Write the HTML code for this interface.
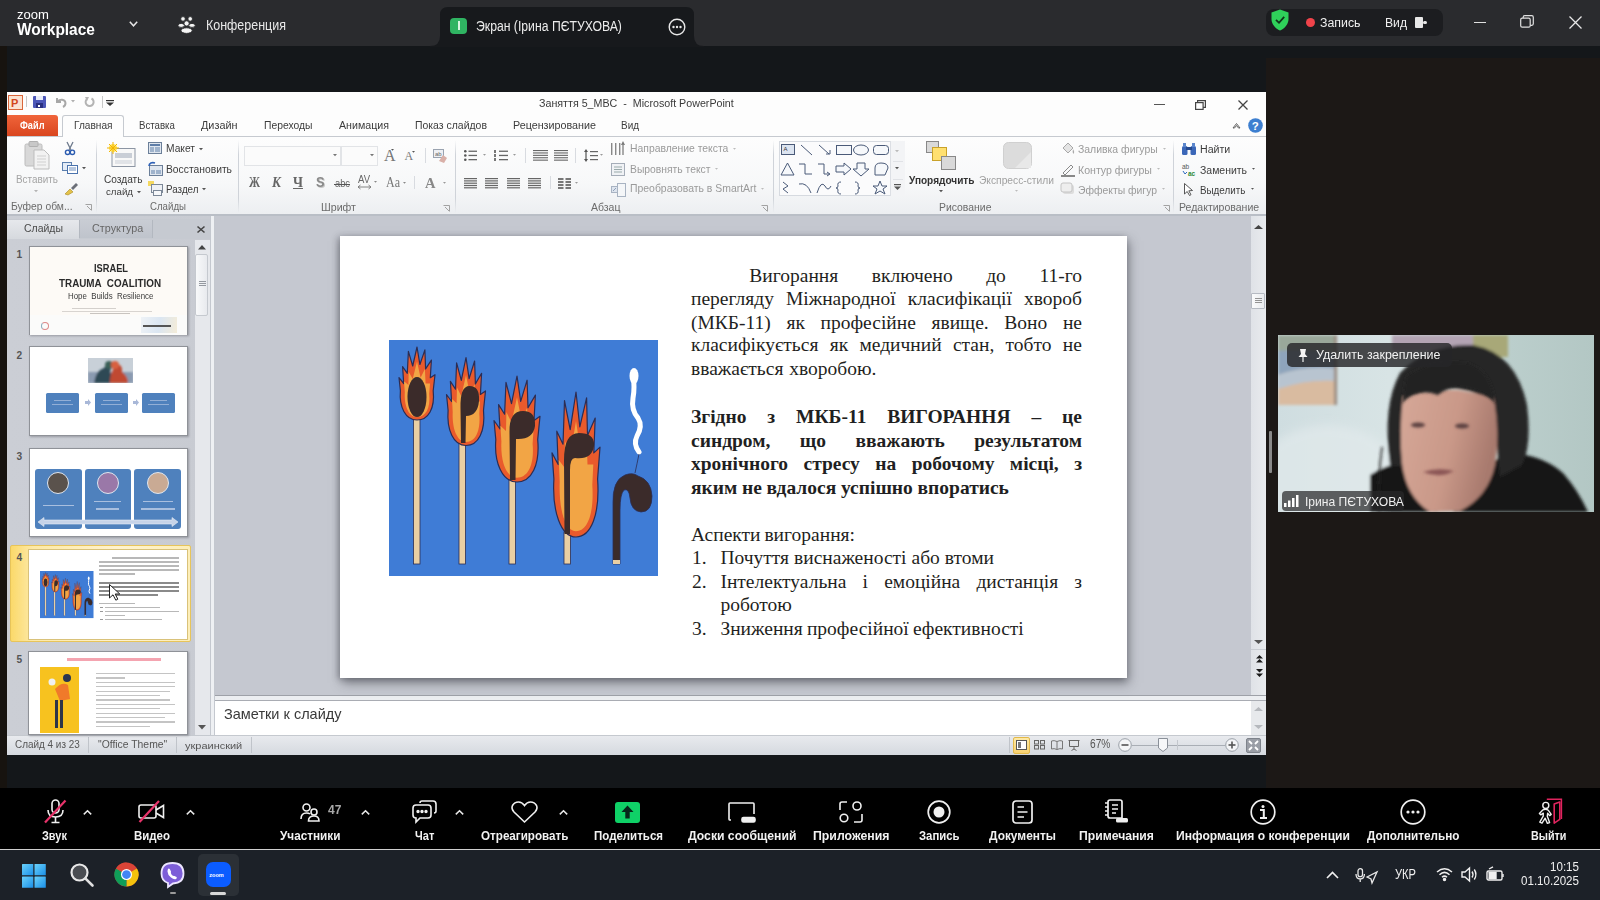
<!DOCTYPE html><html><head><meta charset="utf-8"><style>
*{margin:0;padding:0;box-sizing:border-box}
html,body{width:1600px;height:900px;overflow:hidden;background:#14171a;font-family:"Liberation Sans",sans-serif}
.a{position:absolute}
.t{position:absolute;white-space:nowrap;line-height:1;transform-origin:0 0}
svg{position:absolute;overflow:visible}
</style></head><body><div class="a" style="left:0px;top:0px;width:1600px;height:46px;background:#2a2b2e"></div>
<div class="a" style="left:0px;top:46px;width:1600px;height:742px;background:#14171a"></div>
<div class="a" style="left:0px;top:46px;width:7px;height:742px;background:#17130f"></div>
<div class="a" style="left:1266px;top:58px;width:334px;height:730px;background:#1c1816"></div>
<div class="a" style="left:0px;top:788px;width:1600px;height:61px;background:#000"></div>
<div class="a" style="left:0px;top:849px;width:1600px;height:1px;background:#cfcfcf"></div>
<div class="a" style="left:0px;top:850px;width:1600px;height:50px;background:#1c2128"></div>
<div class="t" style="left:17.00px;top:7.80px;font-size:13.23px;color:#fff;transform:scaleX(0.9895);">zoom</div>
<div class="t" style="left:17.00px;top:21.42px;font-size:16.28px;color:#fff;font-weight:700;transform:scaleX(0.9507);">Workplace</div>
<svg style="left:129px;top:21px" width="9" height="6"><path d="M0.8 0.8 L4.5 4.8 L8.2 0.8" stroke="#e6e6e6" stroke-width="1.5" fill="none"/></svg>
<svg style="left:178px;top:16px" width="18" height="18" viewBox="0 0 18 18"><g fill="#f4f4f4" stroke="#2a2b2e" stroke-width="0.9"><circle cx="5" cy="2.9" r="2.3"/><circle cx="12.2" cy="2.9" r="2.3"/><ellipse cx="3.2" cy="9.4" rx="3.2" ry="2"/><ellipse cx="14" cy="9.4" rx="3.2" ry="2"/><circle cx="8.6" cy="7.4" r="2.6"/><ellipse cx="8.6" cy="14.6" rx="5.6" ry="2.8"/></g></svg>
<div class="t" style="left:206.00px;top:18.79px;font-size:13.95px;color:#e8e8e8;transform:scaleX(0.8951);">Конференция</div>
<svg style="left:430px;top:7px" width="274" height="40" viewBox="0 0 274 40"><path d="M0 39 Q10 39 10 29 L10 8 Q10 0 18 0 L256 0 Q264 0 264 8 L264 29 Q264 39 274 39 L274 40 L0 40Z" fill="#17191c"/></svg>
<div class="a" style="left:450px;top:17.5px;width:17px;height:16.5px;background:#2fb462;border-radius:4px"></div>
<div class="a" style="left:458px;top:21px;width:1.6px;height:9px;background:#d8f5e0"></div>
<div class="t" style="left:476.00px;top:18.54px;font-size:14.24px;color:#ececec;transform:scaleX(0.8584);">Экран (Ірина ПЄТУХОВА)</div>
<svg style="left:668px;top:18px" width="18" height="18" viewBox="0 0 18 18"><circle cx="9" cy="9" r="7.8" stroke="#e8e8e8" stroke-width="1.4" fill="none"/><circle cx="5.5" cy="9" r="1.2" fill="#e8e8e8"/><circle cx="9" cy="9" r="1.2" fill="#e8e8e8"/><circle cx="12.5" cy="9" r="1.2" fill="#e8e8e8"/></svg>
<div class="a" style="left:1265.5px;top:9px;width:177px;height:26.5px;background:#1c1d20;border-radius:8px"></div>
<svg style="left:1271px;top:9px" width="18" height="22" viewBox="0 0 18 22"><path d="M9 0.5 L17.5 3.5 L17.5 10 C17.5 15.5 13.5 19.5 9 21.5 C4.5 19.5 0.5 15.5 0.5 10 L0.5 3.5Z" fill="#2fd15a"/><path d="M5 10.8 L8 13.8 L13.2 7.8" stroke="#10361a" stroke-width="1.8" fill="none"/></svg>
<div class="a" style="left:1306px;top:18px;width:9px;height:9px;background:#f0434a;border-radius:50%"></div>
<div class="t" style="left:1319.50px;top:15.63px;font-size:13.66px;color:#f0f0f0;transform:scaleX(0.9037);">Запись</div>
<div class="t" style="left:1385.00px;top:15.63px;font-size:13.66px;color:#f0f0f0;transform:scaleX(0.8896);">Вид</div>
<div class="a" style="left:1414.5px;top:17px;width:8px;height:10.5px;background:#e8e8e8;border-radius:1px"></div>
<div class="a" style="left:1423px;top:20.5px;width:3.5px;height:3.5px;background:#e8e8e8;border-radius:50%"></div>
<div class="a" style="left:1474px;top:21.5px;width:11.5px;height:1.2px;background:#e0e0e0"></div>
<svg style="left:1520px;top:15px" width="14" height="13" viewBox="0 0 14 13"><rect x="0.7" y="3.2" width="9.5" height="9" rx="1.5" stroke="#e0e0e0" stroke-width="1.2" fill="none"/><path d="M3.2 3.2 V2.2 Q3.2 0.7 4.7 0.7 H11.8 Q13.3 0.7 13.3 2.2 V8.8 Q13.3 10.3 11.8 10.3 H10.2" stroke="#e0e0e0" stroke-width="1.2" fill="none"/></svg>
<svg style="left:1568.5px;top:15.5px" width="13" height="13" viewBox="0 0 13 13"><path d="M0.5 0.5 L12.5 12.5 M12.5 0.5 L0.5 12.5" stroke="#e8e8e8" stroke-width="1.3"/></svg>
<div class="a" style="left:7px;top:92px;width:1259px;height:663px;background:#fdfdfd"></div>
<svg style="left:8px;top:94.5px" width="15" height="15" viewBox="0 0 15 15"><rect x="0.5" y="0.5" width="14" height="14" fill="#fbe3d2" stroke="#d9663a"/><text x="3" y="12" font-family="Liberation Sans" font-weight="700" font-size="11" fill="#d2461c">P</text></svg>
<div class="a" style="left:26px;top:96px;width:1px;height:11px;background:#c8c8c8"></div>
<svg style="left:33px;top:96px" width="13" height="12" viewBox="0 0 13 12"><rect x="0" y="0" width="13" height="12" rx="1" fill="#4c57b8"/><rect x="3" y="0" width="7" height="4" fill="#e8ecf8"/><rect x="3" y="7" width="7" height="5" fill="#2a3080"/><rect x="5" y="9" width="2" height="2" fill="#fff"/></svg>
<svg style="left:55px;top:97px" width="12" height="10" viewBox="0 0 12 10"><path d="M2 1 V5 H6" stroke="#a8a8a8" stroke-width="2" fill="none"/><path d="M2.5 4.5 C5 2 10 2 10.5 6 C10.5 8 9 9.5 8 10" stroke="#a8a8a8" stroke-width="2" fill="none"/></svg>
<svg style="left:71px;top:100px" width="4" height="3"><path d="M0 0 H4 L2 2.5Z" fill="#b0b0b0"/></svg>
<svg style="left:84px;top:97px" width="11" height="10" viewBox="0 0 11 10"><path d="M7.5 1.5 A4 4 0 1 1 3 2" stroke="#b4b4b4" stroke-width="2" fill="none"/><path d="M1 0 L5 0 L3 4Z" fill="#b4b4b4"/></svg>
<div class="a" style="left:102px;top:96px;width:1px;height:12px;background:#c8c8c8"></div>
<svg style="left:106px;top:100px" width="8" height="6"><rect x="0" y="0" width="8" height="1.2" fill="#333"/><path d="M0 2.5 H8 L4 6Z" fill="#333"/></svg>
<div class="t" style="left:538.50px;top:97.68px;font-size:11.48px;color:#3a3a3a;transform:scaleX(0.9323);white-space:pre">Заняття 5_MBC  -  Microsoft PowerPoint</div>
<div class="a" style="left:1154px;top:104px;width:10.5px;height:1.3px;background:#555"></div>
<svg style="left:1195px;top:100px" width="11" height="10" viewBox="0 0 11 10"><rect x="0.6" y="2.6" width="7.5" height="6.8" stroke="#444" stroke-width="1.2" fill="none"/><path d="M2.6 2.6 V0.6 H10.4 V7.4 H8.1" stroke="#444" stroke-width="1.2" fill="none"/></svg>
<svg style="left:1238px;top:100px" width="10" height="10" viewBox="0 0 10 10"><path d="M0.5 0.5 L9.5 9.5 M9.5 0.5 L0.5 9.5" stroke="#444" stroke-width="1.3"/></svg>
<div class="a" style="left:7px;top:136px;width:1259px;height:1px;background:#c6cad0"></div>
<div class="a" style="left:7px;top:115px;width:51px;height:21px;background:linear-gradient(#f0643a,#d9461f);border-radius:0 3px 0 0"></div>
<div class="t" style="left:20.00px;top:120.27px;font-size:10.90px;color:#fff;font-weight:700;transform:scaleX(0.8449);">Файл</div>
<div class="a" style="left:62px;top:115px;width:62px;height:22px;background:#fdfdfd;border:1px solid #c6cad0;border-bottom:none;border-radius:3px 3px 0 0"></div>
<div class="t" style="left:74.00px;top:120.27px;font-size:10.90px;color:#3c3c3c;transform:scaleX(0.9282);">Главная</div>
<div class="t" style="left:139.00px;top:120.27px;font-size:10.90px;color:#3c3c3c;transform:scaleX(0.8877);">Вставка</div>
<div class="t" style="left:201.00px;top:120.27px;font-size:10.90px;color:#3c3c3c;transform:scaleX(0.9965);">Дизайн</div>
<div class="t" style="left:264.00px;top:120.27px;font-size:10.90px;color:#3c3c3c;transform:scaleX(0.9486);">Переходы</div>
<div class="t" style="left:339.00px;top:120.27px;font-size:10.90px;color:#3c3c3c;transform:scaleX(0.9769);">Анимация</div>
<div class="t" style="left:415.00px;top:120.27px;font-size:10.90px;color:#3c3c3c;transform:scaleX(0.9593);">Показ слайдов</div>
<div class="t" style="left:512.50px;top:120.27px;font-size:10.90px;color:#3c3c3c;transform:scaleX(0.9863);">Рецензирование</div>
<div class="t" style="left:621.00px;top:120.27px;font-size:10.90px;color:#3c3c3c;transform:scaleX(0.9123);">Вид</div>
<svg style="left:1231.5px;top:122px" width="9" height="7" viewBox="0 0 9 7"><path d="M1 6 L4.5 1.5 L8 6 L6.5 6 L4.5 3.5 L2.5 6Z" stroke="#555" stroke-width="0.9" fill="none"/></svg>
<svg style="left:1248px;top:117.8px" width="15" height="15" viewBox="0 0 15 15"><circle cx="7.5" cy="7.5" r="7.3" fill="#3d7fd0"/><text x="3.8" y="12" font-family="Liberation Sans" font-weight="700" font-size="11.5" fill="#fff">?</text></svg>
<div class="a" style="left:7px;top:137px;width:1259px;height:78px;background:linear-gradient(#fdfdfd 0%,#f7f8f9 60%,#eceef1 100%)"></div>
<div class="a" style="left:7px;top:214px;width:1259px;height:1.5px;background:#b9bec6"></div>
<div class="a" style="left:96px;top:140px;width:1px;height:73px;background:linear-gradient(rgba(200,205,212,0),#cfd3d9 20%,#cfd3d9 80%,rgba(200,205,212,0))"></div>
<div class="a" style="left:238px;top:140px;width:1px;height:73px;background:linear-gradient(rgba(200,205,212,0),#cfd3d9 20%,#cfd3d9 80%,rgba(200,205,212,0))"></div>
<div class="a" style="left:454.5px;top:140px;width:1px;height:73px;background:linear-gradient(rgba(200,205,212,0),#cfd3d9 20%,#cfd3d9 80%,rgba(200,205,212,0))"></div>
<div class="a" style="left:772.5px;top:140px;width:1px;height:73px;background:linear-gradient(rgba(200,205,212,0),#cfd3d9 20%,#cfd3d9 80%,rgba(200,205,212,0))"></div>
<div class="a" style="left:1173px;top:140px;width:1px;height:73px;background:linear-gradient(rgba(200,205,212,0),#cfd3d9 20%,#cfd3d9 80%,rgba(200,205,212,0))"></div>
<svg style="left:24px;top:141px" width="26" height="29" viewBox="0 0 26 29"><rect x="1" y="3" width="17" height="22" rx="1.5" fill="#d8d8d8" stroke="#bcbcbc"/><rect x="5" y="0.5" width="9" height="5" rx="1" fill="#c8c8c8" stroke="#b0b0b0"/><path d="M10 9 H20 L25 14 V28 H10Z" fill="#f2f2f2" stroke="#bdbdbd"/><path d="M13 15 H22 M13 18 H22 M13 21 H22 M13 24 H22" stroke="#d0d0d0"/></svg>
<div class="t" style="left:15.50px;top:174.25px;font-size:11.05px;color:#a4a4a4;transform:scaleX(0.8967);">Вставить</div>
<svg style="left:33.5px;top:190px" width="4" height="4"><path d="M0 0 H4 L2.0 2.3Z" fill="#b4b4b4"/></svg>
<svg style="left:65px;top:142px" width="10" height="13" viewBox="0 0 10 13"><path d="M2 0 L6 8 M8 0 L4 8" stroke="#6d7a8c" stroke-width="1.3"/><circle cx="2.6" cy="10.3" r="2.2" fill="none" stroke="#2a5bb0" stroke-width="1.4"/><circle cx="7.4" cy="10.3" r="2.2" fill="none" stroke="#2a5bb0" stroke-width="1.4"/></svg>
<svg style="left:62px;top:162px" width="16" height="12" viewBox="0 0 16 12"><rect x="0.5" y="0.5" width="9" height="8" fill="#e4ecf6" stroke="#5b7fae"/><rect x="5.5" y="3.5" width="10" height="8" fill="#fff" stroke="#4a73ad"/><path d="M7 6 H14 M7 8 H14" stroke="#4a73ad" stroke-width="0.8"/></svg>
<svg style="left:82px;top:167px" width="4" height="4"><path d="M0 0 H4 L2.0 2.3Z" fill="#555"/></svg>
<svg style="left:64px;top:181px" width="14" height="14" viewBox="0 0 14 14"><path d="M1 13 L6 8 L9 11 L4 14Z" fill="#e4c24a" stroke="#a88a22" stroke-width="0.6"/><path d="M7 7 L12 2 L14 4 L9 9Z" fill="#6b6f78"/></svg>
<div class="t" style="left:11.00px;top:202.34px;font-size:10.47px;color:#6b6b6b;transform:scaleX(0.9852);">Буфер обм...</div>
<svg style="left:85px;top:204px" width="7" height="7"><path d="M0.5 0.5 H6.5 V6.5 M2 2 L6 6" stroke="#999" stroke-width="0.9" fill="none"/></svg>
<svg style="left:107px;top:142px" width="29" height="26" viewBox="0 0 29 26"><rect x="5" y="6.5" width="23" height="18" fill="#f8f8f8" stroke="#8c95a3"/><rect x="8" y="11" width="17" height="5" fill="#c9ced6"/><path d="M8 19 H25 M8 21 H25" stroke="#c9ced6"/><circle cx="6" cy="6" r="4" fill="#ffe35a"/><path d="M6 0 V12 M0 6 H12 M2 2 L10 10 M10 2 L2 10" stroke="#f2b400" stroke-width="1"/></svg>
<div class="t" style="left:104.00px;top:174.20px;font-size:11.34px;color:#3c3c3c;transform:scaleX(0.8937);">Создать</div>
<div class="t" style="left:106.00px;top:186.98px;font-size:9.59px;color:#3c3c3c;transform:scaleX(1.0124);">слайд</div>
<svg style="left:136.5px;top:191px" width="4" height="4"><path d="M0 0 H4 L2.0 2.3Z" fill="#555"/></svg>
<svg style="left:147.5px;top:142px" width="14" height="12" viewBox="0 0 14 12"><rect x="0.5" y="0.5" width="13" height="11" fill="#dfe6ef" stroke="#6b7f99"/><rect x="2" y="2" width="10" height="2" fill="#5f7ea8"/><rect x="2" y="5" width="4" height="5" fill="#9fb3cc"/><rect x="7" y="5" width="5" height="5" fill="#9fb3cc"/></svg>
<div class="t" style="left:165.50px;top:143.27px;font-size:10.90px;color:#3c3c3c;transform:scaleX(0.9400);">Макет</div>
<svg style="left:199px;top:148px" width="4" height="4"><path d="M0 0 H4 L2.0 2.3Z" fill="#555"/></svg>
<svg style="left:147.5px;top:162px" width="15" height="14" viewBox="0 0 15 14"><rect x="1.5" y="3.5" width="13" height="10" fill="#dfe6ef" stroke="#6b7f99"/><rect x="3" y="8" width="4" height="4" fill="#9fb3cc"/><rect x="8" y="8" width="5" height="4" fill="#9fb3cc"/><path d="M1 4 C1 1 4 0 7 1" stroke="#2e62b8" stroke-width="1.6" fill="none"/></svg>
<div class="t" style="left:165.50px;top:163.16px;font-size:11.63px;color:#3c3c3c;transform:scaleX(0.8862);">Восстановить</div>
<svg style="left:147.5px;top:181px" width="15" height="15" viewBox="0 0 15 15"><rect x="0" y="0" width="6" height="5" fill="#f4d860"/><rect x="3.5" y="3.5" width="11" height="8" fill="#eef1f5" stroke="#7b8797"/><rect x="5.5" y="9.5" width="8" height="5" fill="#f5f7fa" stroke="#7b8797"/></svg>
<div class="t" style="left:165.50px;top:183.16px;font-size:11.63px;color:#3c3c3c;transform:scaleX(0.8457);">Раздел</div>
<svg style="left:202px;top:188px" width="4" height="4"><path d="M0 0 H4 L2.0 2.3Z" fill="#555"/></svg>
<div class="t" style="left:150.00px;top:202.34px;font-size:10.47px;color:#6b6b6b;transform:scaleX(0.9235);">Слайды</div>
<div class="a" style="left:244px;top:146px;width:97px;height:19.5px;background:#fbfbfb;border:1px solid #e2e4e7"></div>
<div class="a" style="left:341px;top:146px;width:37px;height:19.5px;background:#fbfbfb;border:1px solid #e2e4e7"></div>
<svg style="left:333px;top:154px" width="4" height="4"><path d="M0 0 H4 L2.0 2.3Z" fill="#777"/></svg>
<svg style="left:369.5px;top:154px" width="4" height="4"><path d="M0 0 H4 L2.0 2.3Z" fill="#777"/></svg>
<div class="t" style="left:384.00px;top:147.58px;font-size:16.03px;color:#777;font-family:'Liberation Serif',serif;">A</div>
<div class="t" style="left:404.50px;top:151.33px;font-size:11.91px;color:#777;font-family:'Liberation Serif',serif;">A</div>
<svg style="left:391px;top:149px" width="3" height="3"><path d="M0 0 H3 L1.5 1.8Z" fill="#555"/></svg>
<svg style="left:412px;top:151px" width="3" height="3"><path d="M0 0 H3 L1.5 1.8Z" fill="#555"/></svg>
<div class="a" style="left:424.5px;top:148px;width:1px;height:15px;background:#d8dbe0"></div>
<svg style="left:432.5px;top:149px" width="15" height="14" viewBox="0 0 15 14"><rect x="0.5" y="0.5" width="10" height="8" fill="#eef0f4" stroke="#9aa3b0"/><text x="2" y="7" font-family="Liberation Sans" font-size="6" fill="#666">ab</text><path d="M6 12 L10 6 L14 9 L11 14Z" fill="#d9b0a8"/></svg>
<div class="t" style="left:249.00px;top:175.35px;font-size:14.50px;color:#666;font-weight:700;font-family:'Liberation Serif',serif;transform:scaleX(0.7661);">Ж</div>
<div class="t" style="left:271.50px;top:175.35px;font-size:14.50px;color:#666;font-weight:700;font-family:'Liberation Serif',serif;transform:scaleX(0.9034);font-style:italic;">К</div>
<div class="t" style="left:292.50px;top:175.35px;font-size:14.50px;color:#666;font-weight:700;font-family:'Liberation Serif',serif;transform:scaleX(0.9381);text-decoration:underline;">Ч</div>
<div class="t" style="left:316.00px;top:175.81px;font-size:13.81px;color:#8a8a8a;font-weight:700;transform:scaleX(0.9257);text-shadow:1px 1px 0 #c8c8c8">S</div>
<div class="t" style="left:334.50px;top:178.89px;font-size:10.17px;color:#666;transform:scaleX(0.9157);">abc</div>
<div class="a" style="left:334px;top:184px;width:16px;height:1px;background:#555"></div>
<div class="t" style="left:358.00px;top:174.89px;font-size:10.17px;color:#666;transform:scaleX(0.9361);">AV</div>
<svg style="left:358px;top:184.5px" width="13" height="4"><path d="M0 2 H13 M0 2 L2.5 0 M0 2 L2.5 4 M13 2 L10.5 0 M13 2 L10.5 4" stroke="#777" stroke-width="0.9" fill="none"/></svg>
<svg style="left:373.5px;top:181px" width="3" height="3"><path d="M0 0 H3 L1.5 1.8Z" fill="#888"/></svg>
<div class="t" style="left:386.00px;top:175.35px;font-size:14.50px;color:#777;font-family:'Liberation Serif',serif;transform:scaleX(0.8286);">Aa</div>
<svg style="left:403px;top:181.5px" width="3" height="3"><path d="M0 0 H3 L1.5 1.8Z" fill="#888"/></svg>
<div class="a" style="left:414px;top:176px;width:1px;height:13px;background:#d8dbe0"></div>
<div class="t" style="left:425.00px;top:175.22px;font-size:15.27px;color:#888;font-weight:700;font-family:'Liberation Serif',serif;transform:scaleX(0.9552);">A</div>
<svg style="left:443px;top:181.5px" width="3" height="3"><path d="M0 0 H3 L1.5 1.8Z" fill="#999"/></svg>
<div class="t" style="left:320.50px;top:202.79px;font-size:10.17px;color:#6b6b6b;transform:scaleX(1.0456);">Шрифт</div>
<svg style="left:442.5px;top:205px" width="7" height="7"><path d="M0.5 0.5 H6.5 V6.5 M2 2 L6 6" stroke="#999" stroke-width="0.9" fill="none"/></svg>
<svg style="left:464px;top:150px" width="13" height="11"><circle cx="1.3" cy="1.3" r="1.3" fill="#555"/><circle cx="1.3" cy="5.5" r="1.3" fill="#555"/><circle cx="1.3" cy="9.7" r="1.3" fill="#555"/><rect x="4.5" y="0.6" width="8.5" height="1.3" fill="#666"/><rect x="4.5" y="4.8" width="8.5" height="1.3" fill="#666"/><rect x="4.5" y="9" width="8.5" height="1.3" fill="#666"/></svg>
<svg style="left:483px;top:154px" width="3" height="3"><path d="M0 0 H3 L1.5 1.8Z" fill="#999"/></svg>
<svg style="left:494px;top:150px" width="14" height="11"><rect x="0" y="0" width="2" height="3" fill="#777"/><rect x="0" y="4" width="2" height="3" fill="#777"/><rect x="0" y="8" width="2" height="3" fill="#777"/><rect x="5" y="0.6" width="9" height="1.3" fill="#666"/><rect x="5" y="4.8" width="9" height="1.3" fill="#666"/><rect x="5" y="9" width="9" height="1.3" fill="#666"/></svg>
<svg style="left:513px;top:154px" width="3" height="3"><path d="M0 0 H3 L1.5 1.8Z" fill="#999"/></svg>
<div class="a" style="left:525px;top:148px;width:1px;height:15px;background:#d8dbe0"></div>
<svg style="left:533px;top:150px" width="15" height="14.0"><rect x="0" y="0.0" width="15" height="1.1" fill="#666"/><rect x="0" y="2.4" width="15" height="1.1" fill="#666"/><rect x="0" y="4.8" width="15" height="1.1" fill="#666"/><rect x="0" y="7.199999999999999" width="15" height="1.1" fill="#666"/><rect x="0" y="9.6" width="15" height="1.1" fill="#666"/></svg>
<svg style="left:554px;top:150px" width="14" height="14.0"><rect x="0" y="0.0" width="14" height="1.1" fill="#666"/><rect x="0" y="2.4" width="14" height="1.1" fill="#666"/><rect x="0" y="4.8" width="14" height="1.1" fill="#666"/><rect x="0" y="7.199999999999999" width="14" height="1.1" fill="#666"/><rect x="0" y="9.6" width="14" height="1.1" fill="#666"/></svg>
<div class="a" style="left:575px;top:148px;width:1px;height:15px;background:#d8dbe0"></div>
<svg style="left:584px;top:149px" width="14" height="13"><path d="M2 0 L4 3 H0Z M2 13 L4 10 H0Z" fill="#555"/><rect x="1.4" y="3" width="1.2" height="7" fill="#555"/><rect x="6" y="2" width="8" height="1.2" fill="#666"/><rect x="6" y="6" width="8" height="1.2" fill="#666"/><rect x="6" y="10" width="8" height="1.2" fill="#666"/></svg>
<svg style="left:600px;top:154px" width="3" height="3"><path d="M0 0 H3 L1.5 1.8Z" fill="#999"/></svg>
<svg style="left:464px;top:177.5px" width="13" height="13.5"><rect x="0" y="0.0" width="13" height="1.2" fill="#666"/><rect x="0" y="2.3" width="13" height="1.2" fill="#666"/><rect x="0" y="4.6" width="13" height="1.2" fill="#666"/><rect x="0" y="6.8999999999999995" width="13" height="1.2" fill="#666"/><rect x="0" y="9.2" width="13" height="1.2" fill="#666"/></svg>
<svg style="left:485px;top:177.5px" width="13" height="13.5"><rect x="0" y="0.0" width="13" height="1.2" fill="#666"/><rect x="0" y="2.3" width="13" height="1.2" fill="#666"/><rect x="0" y="4.6" width="13" height="1.2" fill="#666"/><rect x="0" y="6.8999999999999995" width="13" height="1.2" fill="#666"/><rect x="0" y="9.2" width="13" height="1.2" fill="#666"/></svg>
<svg style="left:507px;top:177.5px" width="13" height="13.5"><rect x="0" y="0.0" width="13" height="1.2" fill="#666"/><rect x="0" y="2.3" width="13" height="1.2" fill="#666"/><rect x="0" y="4.6" width="13" height="1.2" fill="#666"/><rect x="0" y="6.8999999999999995" width="13" height="1.2" fill="#666"/><rect x="0" y="9.2" width="13" height="1.2" fill="#666"/></svg>
<svg style="left:528px;top:177.5px" width="13" height="13.5"><rect x="0" y="0.0" width="13" height="1.2" fill="#666"/><rect x="0" y="2.3" width="13" height="1.2" fill="#666"/><rect x="0" y="4.6" width="13" height="1.2" fill="#666"/><rect x="0" y="6.8999999999999995" width="13" height="1.2" fill="#666"/><rect x="0" y="9.2" width="13" height="1.2" fill="#666"/></svg>
<div class="a" style="left:549.5px;top:176px;width:1px;height:13px;background:#d8dbe0"></div>
<svg style="left:557.5px;top:177.5px" width="13" height="11"><rect x="0" y="0" width="5.5" height="11" fill="#777"/><rect x="7.5" y="0" width="5.5" height="11" fill="#777"/><path d="M0 2.5 H13 M0 5.5 H13 M0 8.5 H13" stroke="#f4f4f4" stroke-width="1"/></svg>
<svg style="left:574.5px;top:181.5px" width="3" height="3"><path d="M0 0 H3 L1.5 1.8Z" fill="#999"/></svg>
<svg style="left:611px;top:141px" width="14" height="14"><rect x="0" y="2" width="1.4" height="12" fill="#888"/><rect x="4" y="2" width="1.4" height="12" fill="#888"/><rect x="8" y="2" width="1.4" height="12" fill="#888"/><path d="M12 0 L14 4 H10Z" fill="#777"/><rect x="11.3" y="3" width="1.4" height="11" fill="#888"/></svg>
<div class="t" style="left:629.50px;top:143.27px;font-size:10.90px;color:#9a9a9a;transform:scaleX(0.9526);">Направление текста</div>
<svg style="left:733px;top:148px" width="3" height="3"><path d="M0 0 H3 L1.5 1.8Z" fill="#bbb"/></svg>
<svg style="left:611px;top:162.5px" width="14" height="13"><rect x="0.5" y="0.5" width="13" height="12" fill="#f0f2f5" stroke="#a5adb8"/><path d="M3 4 H11 M3 6.5 H11 M3 9 H11" stroke="#9aa" stroke-width="1"/></svg>
<div class="t" style="left:629.50px;top:163.77px;font-size:10.90px;color:#9a9a9a;transform:scaleX(0.9480);">Выровнять текст</div>
<svg style="left:715px;top:168px" width="3" height="3"><path d="M0 0 H3 L1.5 1.8Z" fill="#bbb"/></svg>
<svg style="left:611px;top:182.5px" width="15" height="14"><rect x="0.5" y="3.5" width="8" height="6" fill="#dde4ee" stroke="#a8b3c2"/><rect x="6.5" y="0.5" width="8" height="13" fill="#f4f6f8" stroke="#a8b3c2"/><path d="M2 8 L5 5" stroke="#8fa0b8"/></svg>
<div class="t" style="left:629.50px;top:183.20px;font-size:11.34px;color:#9a9a9a;transform:scaleX(0.9199);">Преобразовать в SmartArt</div>
<svg style="left:761px;top:188px" width="3" height="3"><path d="M0 0 H3 L1.5 1.8Z" fill="#bbb"/></svg>
<div class="t" style="left:590.50px;top:202.79px;font-size:10.17px;color:#6b6b6b;transform:scaleX(1.0337);">Абзац</div>
<svg style="left:760.5px;top:205px" width="7" height="7"><path d="M0.5 0.5 H6.5 V6.5 M2 2 L6 6" stroke="#999" stroke-width="0.9" fill="none"/></svg>
<div class="a" style="left:778.5px;top:141px;width:126px;height:55px;background:#fbfbfc;border:1px solid #d6dae0"></div>
<div class="a" style="left:890px;top:141px;width:14.5px;height:55px;background:#f3f4f6;border-left:1px solid #dcdfe4"></div>
<svg style="left:895px;top:150px" width="4" height="4"><path d="M0 0 H4 L2.0 2.3Z" fill="#bbb"/></svg>
<div class="a" style="left:893px;top:160.5px;width:10px;height:1px;background:#e0e2e6"></div>
<svg style="left:895px;top:167px" width="4" height="4"><path d="M0 0 H4 L2.0 2.3Z" fill="#555"/></svg>
<div class="a" style="left:893px;top:178.5px;width:10px;height:1px;background:#e0e2e6"></div>
<svg style="left:894px;top:184px" width="7" height="7"><rect x="0" y="0" width="7" height="1.2" fill="#555"/><path d="M0 2.5 H7 L3.5 6Z" fill="#555"/></svg>
<svg style="left:779px;top:142px" width="112" height="54" viewBox="0 0 112 54" fill="none" stroke="#4a5a78" stroke-width="1"><rect x="2.5" y="2.5" width="13" height="10" fill="#dce4f0"/><text x="4.5" y="9" font-family="Liberation Sans" font-size="6" fill="#333" stroke="none">A</text><path d="M22 3 L33 13"/><path d="M40 3 L50 12 M47 12 H51 V8" /><rect x="57.5" y="3.5" width="15" height="9" fill="#f6f8fb"/><ellipse cx="82" cy="8" rx="7.5" ry="5" fill="#f6f8fb"/><rect x="94.5" y="3.5" width="15" height="9" rx="3" fill="#f6f8fb"/><path d="M2 33 L8.5 21 L15 33Z" fill="#f6f8fb"/><path d="M20 22 H26 V32 H33"/><path d="M39 22 H45 V32 H50 M48 30 L51 32 L48 34"/><path d="M57 24 H65 V21 L72 27 L65 33 V30 H57Z" fill="#f6f8fb"/><path d="M78 21 H86 V27 H90 L82 34 L74 27 H78Z" fill="#f6f8fb"/><path d="M96 33 V26 Q96 21 102 21 Q109 21 109 26 L106 33Z" fill="#f6f8fb"/><path d="M4 40 L9 44 L4 47 L9 51"/><path d="M20 42 Q28 40 32 51"/><path d="M38 51 Q42 38 46 44 Q49 50 52 44"/><path d="M62 40 Q58 40 59 44 Q59 46 57 46 Q59 46 59 48 Q58 52 62 52"/><path d="M76 40 Q80 40 79 44 Q79 46 81 46 Q79 46 79 48 Q80 52 76 52"/><path d="M101 39 L103 44 L108 44 L104 47 L106 52 L101 49 L96 52 L98 47 L94 44 L99 44Z" fill="#f6f8fb"/></svg>
<svg style="left:926px;top:140.5px" width="30" height="29"><rect x="0.5" y="0.5" width="12" height="11" fill="#d9d9d9" stroke="#888"/><rect x="6.5" y="6.5" width="14" height="13" fill="#ffe070" stroke="#c9a22a"/><rect x="15.5" y="15.5" width="14" height="13" fill="#d9d9d9" stroke="#888"/></svg>
<div class="t" style="left:909.00px;top:174.46px;font-size:11.63px;color:#333;font-weight:700;transform:scaleX(0.8666);">Упорядочить</div>
<svg style="left:939px;top:190px" width="4" height="4"><path d="M0 0 H4 L2.0 2.3Z" fill="#555"/></svg>
<svg style="left:1003px;top:142px" width="29" height="27"><rect x="0.5" y="0.5" width="28" height="26" rx="5" fill="#dcdcdc" stroke="#d0d0d0"/><path d="M12 26 L28 10 L28 26Z" fill="#e8e8e8"/></svg>
<div class="t" style="left:979.40px;top:174.46px;font-size:11.63px;color:#a0a0a0;transform:scaleX(0.8817);">Экспресс-стили</div>
<svg style="left:1015px;top:190px" width="3" height="3"><path d="M0 0 H3 L1.5 1.8Z" fill="#bbb"/></svg>
<svg style="left:1061px;top:142.8px" width="14" height="12"><path d="M2 5 L7 0 L12 5 L7 10Z" fill="#e4e4e4" stroke="#a8a8a8"/><path d="M12 6 Q14 9 12.5 11 Q11 9 12 6Z" fill="#aaa"/></svg>
<div class="t" style="left:1077.80px;top:143.16px;font-size:11.63px;color:#9a9a9a;transform:scaleX(0.8977);">Заливка фигуры</div>
<svg style="left:1163px;top:147.5px" width="3" height="3"><path d="M0 0 H3 L1.5 1.8Z" fill="#bbb"/></svg>
<svg style="left:1061px;top:162.5px" width="14" height="14"><path d="M2 10 L10 2 L12 4 L4 12Z" fill="none" stroke="#8a8a8a"/><rect x="0" y="12" width="14" height="2" fill="#888"/></svg>
<div class="t" style="left:1077.80px;top:163.76px;font-size:11.63px;color:#9a9a9a;transform:scaleX(0.9098);">Контур фигуры</div>
<svg style="left:1157px;top:168px" width="3" height="3"><path d="M0 0 H3 L1.5 1.8Z" fill="#bbb"/></svg>
<svg style="left:1061px;top:182.5px" width="14" height="12"><rect x="2" y="2" width="11" height="9" rx="2" fill="#ddd"/><rect x="0" y="0" width="11" height="9" rx="2" fill="#eee" stroke="#c4c4c4"/></svg>
<div class="t" style="left:1077.80px;top:183.76px;font-size:11.63px;color:#9a9a9a;transform:scaleX(0.8922);">Эффекты фигур</div>
<svg style="left:1162px;top:188px" width="3" height="3"><path d="M0 0 H3 L1.5 1.8Z" fill="#bbb"/></svg>
<div class="t" style="left:938.75px;top:202.79px;font-size:10.17px;color:#6b6b6b;transform:scaleX(1.0248);">Рисование</div>
<svg style="left:1163px;top:205px" width="7" height="7"><path d="M0.5 0.5 H6.5 V6.5 M2 2 L6 6" stroke="#999" stroke-width="0.9" fill="none"/></svg>
<svg style="left:1182px;top:142.8px" width="14" height="12"><rect x="0" y="3" width="5.5" height="9" rx="1.5" fill="#3b67b8"/><rect x="8.5" y="3" width="5.5" height="9" rx="1.5" fill="#3b67b8"/><rect x="4" y="4" width="6" height="3" fill="#24498e"/><rect x="1" y="0" width="3" height="4" fill="#5b86cc"/><rect x="10" y="0" width="3" height="4" fill="#5b86cc"/></svg>
<div class="t" style="left:1199.70px;top:143.16px;font-size:11.63px;color:#3c3c3c;transform:scaleX(0.9127);">Найти</div>
<svg style="left:1182px;top:163px" width="15" height="13"><text x="0" y="6" font-family="Liberation Sans" font-size="6.5" fill="#555">ab</text><text x="6" y="12.5" font-family="Liberation Sans" font-weight="700" font-size="6.5" fill="#2d8a3a">ac</text><path d="M1 8 L3 11 L5 9" stroke="#2f6ac0" fill="none"/></svg>
<div class="t" style="left:1199.70px;top:163.76px;font-size:11.63px;color:#3c3c3c;transform:scaleX(0.8992);">Заменить</div>
<svg style="left:1251.5px;top:168px" width="3" height="3"><path d="M0 0 H3 L1.5 1.8Z" fill="#555"/></svg>
<svg style="left:1184px;top:183.4px" width="10" height="13"><path d="M0.5 0.5 V11 L3.2 8.5 L5.5 12.5 L7 11.7 L4.8 7.8 L8.5 7.5Z" fill="#fff" stroke="#444" stroke-width="0.9"/></svg>
<div class="t" style="left:1199.70px;top:183.76px;font-size:11.63px;color:#3c3c3c;transform:scaleX(0.8442);">Выделить</div>
<svg style="left:1250.5px;top:188px" width="3" height="3"><path d="M0 0 H3 L1.5 1.8Z" fill="#555"/></svg>
<div class="t" style="left:1178.75px;top:202.79px;font-size:10.17px;color:#6b6b6b;transform:scaleX(1.0357);">Редактирование</div>
<div class="a" style="left:7px;top:215.5px;width:1259px;height:520px;background:#c5c8d0"></div>
<div class="a" style="left:7px;top:215.5px;width:202.5px;height:520px;background:linear-gradient(90deg,#cbced5,#c8cbd2)"></div>
<div class="a" style="left:209.5px;top:215.5px;width:5px;height:520px;background:#eef0f3;border-left:1px solid #c4c8cf;border-right:1px solid #c4c8cf"></div>
<div class="a" style="left:7px;top:218.5px;width:202.5px;height:20px;background:#c6cad1"></div>
<div class="a" style="left:7px;top:219.5px;width:72px;height:19px;background:linear-gradient(#e6e8ec,#d6d9de)"></div>
<div class="a" style="left:79px;top:219.5px;width:74px;height:18px;background:linear-gradient(#c9cdd4,#bfc4cc);border-left:1px solid #b3b8c0;border-right:1px solid #b3b8c0"></div>
<div class="t" style="left:24.00px;top:222.62px;font-size:10.61px;color:#4a4a4a;transform:scaleX(0.9867);">Слайды</div>
<div class="t" style="left:91.70px;top:222.62px;font-size:10.61px;color:#666;transform:scaleX(1.0179);">Структура</div>
<svg style="left:196.5px;top:225.7px" width="8" height="7"><path d="M0.5 0.5 L7.5 6.5 M7.5 0.5 L0.5 6.5" stroke="#444" stroke-width="1.6"/></svg>
<div class="a" style="left:194.5px;top:240px;width:15px;height:495px;background:#e6e8ec"></div>
<svg style="left:198px;top:244.5px" width="8" height="5"><path d="M0 4.5 L4 0 L8 4.5Z" fill="#444"/></svg>
<div class="a" style="left:195.3px;top:253.9px;width:12.7px;height:62px;background:linear-gradient(90deg,#f8f9fa,#e8eaee);border:1px solid #c5c9cf;border-radius:2px"></div>
<svg style="left:198.5px;top:281px" width="7" height="6"><path d="M0 0.5 H7 M0 2.5 H7 M0 4.5 H7" stroke="#8a8f96" stroke-width="0.9"/></svg>
<svg style="left:198px;top:724.5px" width="8" height="5"><path d="M0 0 L4 4.5 L8 0Z" fill="#555"/></svg>
<div class="a" style="left:1250.7px;top:215.5px;width:15.3px;height:480px;background:linear-gradient(90deg,#dfe2e7,#e9ebee)"></div>
<svg style="left:1254px;top:225px" width="9" height="4"><path d="M0 4 L4.5 0 L9 4Z" fill="#444"/></svg>
<div class="a" style="left:1251.3px;top:292.7px;width:13.4px;height:16px;background:linear-gradient(90deg,#fafbfc,#e9ebee);border:1px solid #b5bac2;border-radius:1px"></div>
<svg style="left:1254.5px;top:297.5px" width="7" height="6"><path d="M0 0.5 H7 M0 2.5 H7 M0 4.5 H7" stroke="#888" stroke-width="0.9"/></svg>
<svg style="left:1254px;top:639.5px" width="9" height="4"><path d="M0 0 L4.5 4 L9 0Z" fill="#555"/></svg>
<div class="a" style="left:1251px;top:649px;width:15px;height:1px;background:#c9cdd3"></div>
<svg style="left:1255.5px;top:655px" width="7" height="23"><path d="M0 3.5 L3.5 0 L7 3.5Z M0 7.5 L3.5 4 L7 7.5Z M0 14 L3.5 17.5 L7 14Z M0 18.5 L3.5 22 L7 18.5Z" fill="#1a1a1a"/></svg>
<div class="a" style="left:214.5px;top:695px;width:1051.5px;height:5.5px;background:#eceef1;border-top:1px solid #9ea1a8;border-bottom:1px solid #a9acb3"></div>
<div class="a" style="left:214.5px;top:700.5px;width:1036px;height:34px;background:#fff"></div>
<div class="a" style="left:1250.7px;top:700.5px;width:15.3px;height:34px;background:#e7e9ec"></div>
<svg style="left:1254px;top:707px" width="9" height="4"><path d="M0 4 L4.5 0 L9 4Z" fill="#b5b8bd"/></svg>
<svg style="left:1254px;top:725px" width="9" height="4"><path d="M0 0 L4.5 4 L9 0Z" fill="#b5b8bd"/></svg>
<div class="t" style="left:224.40px;top:707.03px;font-size:14.97px;color:#3a3a3a;transform:scaleX(0.9690);">Заметки к слайду</div>
<div class="a" style="left:7px;top:734.5px;width:1259px;height:20.5px;background:linear-gradient(#e8eaee,#d5d9df);border-top:1px solid #c5c9cf"></div>
<div class="t" style="left:14.70px;top:739.25px;font-size:11.05px;color:#555;transform:scaleX(0.8990);">Слайд 4 из 23</div>
<div class="a" style="left:88px;top:737px;width:1px;height:16px;background:#c0c4ca"></div>
<div class="t" style="left:97.80px;top:739.25px;font-size:11.05px;color:#555;transform:scaleX(0.9385);">"Office Theme"</div>
<div class="a" style="left:176px;top:737px;width:1px;height:16px;background:#c0c4ca"></div>
<div class="t" style="left:184.60px;top:741.66px;font-size:8.43px;color:#555;transform:scaleX(1.3033);">украинский</div>
<div class="a" style="left:251px;top:737px;width:1px;height:16px;background:#c0c4ca"></div>
<div class="a" style="left:1009.3px;top:737px;width:1px;height:16px;background:#c0c4ca"></div>
<div class="a" style="left:1013px;top:736.8px;width:17.3px;height:17.2px;background:linear-gradient(#fde9a8,#f8d270);border:1px solid #e3b94a;border-radius:2px"></div>
<svg style="left:1016px;top:740px" width="11" height="10"><rect x="0.5" y="0.5" width="10" height="9" fill="#fff" stroke="#555"/><rect x="2" y="2" width="3" height="6" fill="#777"/></svg>
<svg style="left:1034px;top:740px" width="11" height="10" fill="none" stroke="#666"><rect x="0.5" y="0.5" width="4" height="3.5"/><rect x="6.5" y="0.5" width="4" height="3.5"/><rect x="0.5" y="5.5" width="4" height="3.5"/><rect x="6.5" y="5.5" width="4" height="3.5"/></svg>
<svg style="left:1050.5px;top:740px" width="12" height="10" fill="none" stroke="#777"><path d="M0.5 1 Q3 0 6 1.5 Q9 0 11.5 1 V9 Q9 8 6 9.5 Q3 8 0.5 9Z"/><path d="M6 1.5 V9.5"/></svg>
<svg style="left:1068.4px;top:740px" width="12" height="11" fill="none" stroke="#666"><path d="M0.5 0.5 H11.5 M1.5 0.5 V6.5 H10.5 V0.5 M6 6.5 V9 M3.5 10.5 L6 9 L8.5 10.5"/></svg>
<div class="t" style="left:1090.00px;top:738.04px;font-size:12.35px;color:#555;transform:scaleX(0.8216);">67%</div>
<svg style="left:1118px;top:738px" width="14" height="14"><circle cx="7" cy="7" r="6.3" fill="#f4f5f7" stroke="#9aa0a8"/><rect x="3.5" y="6.2" width="7" height="1.6" fill="#555"/></svg>
<div class="a" style="left:1132px;top:744.5px;width:93px;height:1px;background:#a9aeb5"></div>
<div class="a" style="left:1177px;top:740px;width:1px;height:10px;background:#c3c7cd"></div>
<svg style="left:1158px;top:738px" width="10" height="14"><path d="M0.5 0.5 H9.5 V10 L5 13.5 L0.5 10Z" fill="#f6f7f9" stroke="#8a9099"/></svg>
<svg style="left:1224.5px;top:738px" width="14" height="14"><circle cx="7" cy="7" r="6.3" fill="#f4f5f7" stroke="#9aa0a8"/><rect x="3.5" y="6.2" width="7" height="1.6" fill="#555"/><rect x="6.2" y="3.5" width="1.6" height="7" fill="#555"/></svg>
<svg style="left:1246.4px;top:737.5px" width="15" height="15"><rect x="0.5" y="0.5" width="14" height="14" rx="1.5" fill="#9a9ea6" stroke="#7e838b"/><path d="M3 3 L6 6 M12 3 L9 6 M3 12 L6 9 M12 12 L9 9" stroke="#fff" stroke-width="1.8"/></svg>
<div class="a" style="left:340px;top:236px;width:787px;height:442px;background:#fff;box-shadow:2px 5px 10px rgba(50,52,60,0.5),-2px 1px 6px rgba(50,52,60,0.35)"></div>
<svg style="left:389px;top:340px" width="269" height="236" viewBox="0 0 269 236"><rect x="0" y="0" width="269" height="236" fill="#3f7cd6"/><rect x="24.5" y="75.0" width="6.5" height="149.0" fill="#e9cfa3" stroke="#2b2d55" stroke-width="0.8"/><rect x="70.0" y="101.0" width="6.5" height="123.0" fill="#e9cfa3" stroke="#2b2d55" stroke-width="0.8"/><rect x="120.0" y="138.0" width="6.5" height="86.0" fill="#e9cfa3" stroke="#2b2d55" stroke-width="0.8"/><rect x="175.0" y="192.0" width="6.5" height="32.0" fill="#e9cfa3" stroke="#2b2d55" stroke-width="0.8"/><path d="M28.0 80.0 C16.5 80.0 10.0 66.9 11.4 50.8 L10.0 37.7 L14.7 43.5 L13.6 26.7 L18.3 33.3 L19.4 11.4 L23.7 26.0 L28.0 7.0 L30.9 24.5 L35.9 9.9 L36.6 28.9 L42.4 20.1 L41.3 37.7 L46.0 34.7 L44.2 50.8 C46.0 68.3 39.5 80.0 28.0 80.0 Z" fill="#e95a2c" stroke="#2b2d55" stroke-width="1.2" stroke-linejoin="round"/><path d="M28.0 77.1 C19.4 77.1 15.0 65.4 15.8 52.3 L15.0 41.3 L19.4 45.0 L19.7 31.8 L23.7 39.1 L28.0 21.6 L31.6 37.7 L35.9 28.9 L36.6 43.5 L41.0 43.5 L40.2 53.7 C41.7 68.3 36.6 77.1 28.0 77.1 Z" fill="#f2a545"/><path d="M77.0 105.5 C64.5 105.5 57.5 89.7 59.1 70.3 L57.5 54.5 L62.6 61.5 L61.4 41.3 L66.5 49.2 L67.6 22.8 L72.3 40.4 L77.0 17.5 L80.1 38.6 L85.6 21.0 L86.4 43.9 L92.6 33.3 L91.4 54.5 L96.5 50.9 L94.5 70.3 C96.5 91.4 89.5 105.5 77.0 105.5 Z" fill="#e95a2c" stroke="#2b2d55" stroke-width="1.2" stroke-linejoin="round"/><path d="M77.0 102.0 C67.6 102.0 63.0 87.9 63.7 72.1 L63.0 58.9 L67.6 63.3 L68.0 47.4 L72.3 56.2 L77.0 35.1 L80.9 54.5 L85.6 43.9 L86.4 61.5 L91.0 61.5 L90.3 73.8 C91.8 91.4 86.4 102.0 77.0 102.0 Z" fill="#f2a545"/><path d="M128.0 142.0 C113.3 142.0 105.0 122.9 106.8 99.6 L105.0 80.5 L111.0 89.0 L109.6 64.6 L115.6 74.2 L117.0 42.4 L122.5 63.6 L128.0 36.0 L131.7 61.4 L138.1 40.2 L139.0 67.8 L146.4 55.1 L145.0 80.5 L151.0 76.3 L148.7 99.6 C151.0 125.0 142.7 142.0 128.0 142.0 Z" fill="#e95a2c" stroke="#2b2d55" stroke-width="1.2" stroke-linejoin="round"/><path d="M128.0 137.8 C117.0 137.8 111.4 120.8 112.4 101.7 L111.4 85.8 L117.0 91.1 L117.4 72.0 L122.5 82.6 L128.0 57.2 L132.6 80.5 L138.1 67.8 L139.0 89.0 L144.6 89.0 L143.6 103.8 C145.5 125.0 139.0 137.8 128.0 137.8 Z" fill="#f2a545"/><path d="M187.0 197.0 C171.6 197.0 163.0 170.9 164.9 139.0 L163.0 112.9 L169.2 124.5 L167.8 91.2 L174.0 104.2 L175.5 60.7 L181.2 89.7 L187.0 52.0 L190.8 86.8 L197.6 57.8 L198.5 95.5 L206.2 78.1 L204.8 112.9 L211.0 107.1 L208.6 139.0 C211.0 173.8 202.4 197.0 187.0 197.0 Z" fill="#e95a2c" stroke="#2b2d55" stroke-width="1.2" stroke-linejoin="round"/><path d="M187.0 191.2 C175.5 191.2 169.7 168.0 170.7 141.9 L169.7 120.1 L175.5 127.4 L176.0 101.3 L181.2 115.8 L187.0 81.0 L191.8 112.9 L197.6 95.5 L198.5 124.5 L204.3 124.5 L203.3 144.8 C205.2 173.8 198.5 191.2 187.0 191.2 Z" fill="#f2a545"/><ellipse cx="28" cy="57" rx="9.5" ry="20" fill="#3b2b2a"/><path d="M72 103 L71.5 68 Q71 46 80.5 46 Q91 46 90 61 Q88.5 76 77 76 L76.5 103Z" fill="#3b2b2a"/><path d="M121 140 L120.5 92 Q120 71 134 71 Q147 71 146 86 Q144 100 127 99 L126.5 140Z" fill="#3b2b2a"/><path d="M175.5 194 L175 120 Q175 93 190 93 Q206 93 205 106 Q203 120 186 118 Q181 118 181 130 L181 194Z" fill="#3b2b2a"/><path d="M224 224 L224 165 Q223 140 236 135 Q244 132 249 136 Q262 140 263 156 Q263 172 252 172 Q242 171 241 158 Q240 148 235 150 Q231 154 231 170 L231 224Z" fill="#3b2b2a" stroke="#2b2d55" stroke-width="0.8"/><rect x="224" y="220" width="7" height="4" fill="#e9cfa3"/><path d="M244 34 Q246 48 244 58 Q242 70 249 78 Q254 86 248 96 Q244 104 250 112" stroke="#fff" stroke-width="5" fill="none" stroke-linecap="round"/><ellipse cx="245" cy="36" rx="4.5" ry="8" fill="#fff"/><path d="M250 114 Q248 124 246 133" stroke="#2b2d55" stroke-width="0.8" fill="none"/></svg>
<div class="a" style="left:749.3px;top:266.17px;width:332.7px;display:flex;justify-content:space-between;font-family:'Liberation Serif',serif;font-size:19.5px;line-height:1;color:#1f1f22;white-space:nowrap;"><span>Вигорання</span><span>включено</span><span>до</span><span>11-го</span></div>
<div class="a" style="left:691.0px;top:288.67px;width:391.0px;display:flex;justify-content:space-between;font-family:'Liberation Serif',serif;font-size:19.5px;line-height:1;color:#1f1f22;white-space:nowrap;"><span>перегляду</span><span>Міжнародної</span><span>класифікації</span><span>хвороб</span></div>
<div class="a" style="left:691.0px;top:312.57px;width:391.0px;display:flex;justify-content:space-between;font-family:'Liberation Serif',serif;font-size:19.5px;line-height:1;color:#1f1f22;white-space:nowrap;"><span>(МКБ-11)</span><span>як</span><span>професійне</span><span>явище.</span><span>Воно</span><span>не</span></div>
<div class="a" style="left:691.0px;top:335.37px;width:391.0px;display:flex;justify-content:space-between;font-family:'Liberation Serif',serif;font-size:19.5px;line-height:1;color:#1f1f22;white-space:nowrap;"><span>класифікується</span><span>як</span><span>медичний</span><span>стан,</span><span>тобто</span><span>не</span></div>
<div class="a" style="left:691.0px;top:359.27px;font-family:'Liberation Serif',serif;font-size:19.5px;line-height:1;color:#1f1f22;white-space:pre;word-spacing:1.0px;">вважається хворобою.</div>
<div class="a" style="left:691.0px;top:406.97px;width:391.0px;display:flex;justify-content:space-between;font-family:'Liberation Serif',serif;font-size:19.5px;line-height:1;color:#1f1f22;white-space:nowrap;font-weight:700;"><span>Згідно</span><span>з</span><span>МКБ-11</span><span>ВИГОРАННЯ</span><span>–</span><span>це</span></div>
<div class="a" style="left:691.0px;top:430.87px;width:391.0px;display:flex;justify-content:space-between;font-family:'Liberation Serif',serif;font-size:19.5px;line-height:1;color:#1f1f22;white-space:nowrap;font-weight:700;"><span>синдром,</span><span>що</span><span>вважають</span><span>результатом</span></div>
<div class="a" style="left:691.0px;top:454.27px;width:391.0px;display:flex;justify-content:space-between;font-family:'Liberation Serif',serif;font-size:19.5px;line-height:1;color:#1f1f22;white-space:nowrap;font-weight:700;"><span>хронічного</span><span>стресу</span><span>на</span><span>робочому</span><span>місці,</span><span>з</span></div>
<div class="a" style="left:691.0px;top:477.57px;font-family:'Liberation Serif',serif;font-size:19.5px;line-height:1;color:#1f1f22;white-space:pre;word-spacing:-0.2px;font-weight:700;">яким не вдалося успішно впоратись</div>
<div class="a" style="left:691.0px;top:524.67px;font-family:'Liberation Serif',serif;font-size:19.5px;line-height:1;color:#1f1f22;white-space:pre;word-spacing:-1.0px;">Аспекти вигорання:</div>
<div class="a" style="left:692.0px;top:548.47px;font-family:'Liberation Serif',serif;font-size:19.5px;line-height:1;color:#1f1f22;white-space:pre;word-spacing:0.0px;">1.</div>
<div class="a" style="left:720.4px;top:548.47px;font-family:'Liberation Serif',serif;font-size:19.5px;line-height:1;color:#1f1f22;white-space:pre;word-spacing:0.1px;">Почуття виснаженості або втоми</div>
<div class="a" style="left:692.0px;top:571.57px;font-family:'Liberation Serif',serif;font-size:19.5px;line-height:1;color:#1f1f22;white-space:pre;word-spacing:0.0px;">2.</div>
<div class="a" style="left:720.4px;top:571.57px;width:361.6px;display:flex;justify-content:space-between;font-family:'Liberation Serif',serif;font-size:19.5px;line-height:1;color:#1f1f22;white-space:nowrap;"><span>Інтелектуальна</span><span>і</span><span>емоційна</span><span>дистанція</span><span>з</span></div>
<div class="a" style="left:720.4px;top:595.37px;font-family:'Liberation Serif',serif;font-size:19.5px;line-height:1;color:#1f1f22;white-space:pre;word-spacing:0.0px;">роботою</div>
<div class="a" style="left:692.0px;top:619.27px;font-family:'Liberation Serif',serif;font-size:19.5px;line-height:1;color:#1f1f22;white-space:pre;word-spacing:0.0px;">3.</div>
<div class="a" style="left:720.4px;top:619.27px;font-family:'Liberation Serif',serif;font-size:19.5px;line-height:1;color:#1f1f22;white-space:pre;word-spacing:-0.7px;">Зниження професійної ефективності</div>
<div class="a" style="left:28.9px;top:245.5px;width:159px;height:89.5px;background:#fdfaf6;border:1px solid #8f9298;box-shadow:1px 1px 2px rgba(60,60,70,0.35)"></div>
<div class="a" style="left:30px;top:315px;width:157px;height:20px;background:#fbfbfa"></div>
<div class="t" style="left:93.50px;top:263.84px;font-size:10.47px;color:#2a2a2a;font-weight:700;transform:scaleX(0.8865);">ISRAEL</div>
<div class="t" style="left:58.50px;top:277.75px;font-size:11.05px;color:#2a2a2a;font-weight:700;transform:scaleX(0.8921);white-space:pre">TRAUMA  COALITION</div>
<div class="t" style="left:67.80px;top:291.57px;font-size:9.01px;color:#3a3a3a;transform:scaleX(0.8753);white-space:pre">Hope  Builds  Resilience</div>
<div class="a" style="left:72px;top:308px;width:44px;height:1px;background:#d4d0cc"></div>
<div class="a" style="left:62px;top:311px;width:90px;height:1px;background:#d8d4d0"></div>
<div class="a" style="left:90px;top:313px;width:40px;height:1px;background:#c8c4c0"></div>
<div class="a" style="left:41px;top:322px;width:8px;height:8px;border:1.3px solid #d88;border-left-color:#8ab;border-radius:50%"></div>
<div class="a" style="left:141px;top:317px;width:36px;height:16px;background:linear-gradient(100deg,#eef2f6,#dbe6f2 50%,#f4ecd8)"></div>
<div class="a" style="left:143px;top:325px;width:28px;height:1.8px;background:#555"></div>
<div class="a" style="left:28.7px;top:346.2px;width:159px;height:90.3px;background:#fff;border:1px solid #8f9298;box-shadow:1px 1px 2px rgba(60,60,70,0.35)"></div>
<svg style="left:87.5px;top:357.9px;overflow:hidden" width="45.5" height="25" viewBox="0 0 45.5 25"><defs><filter id="tb"><feGaussianBlur stdDeviation="1"/></filter></defs><rect width="45.5" height="25" fill="#c8d0d8"/><g filter="url(#tb)"><rect x="0" y="14" width="45.5" height="11" fill="#8a9ab0"/><path d="M6 25 Q8 12 16 10 Q20 4 24 6 L22 14 Q26 20 24 25Z" fill="#2f4a55"/><path d="M22 25 Q22 16 25 12 Q24 5 30 6 Q35 8 34 14 Q40 18 40 25Z" fill="#c04830"/><circle cx="21" cy="7" r="4" fill="#3a6058"/><circle cx="27" cy="7" r="4" fill="#d86040"/></g></svg>
<div class="a" style="left:46.2px;top:392.9px;width:33px;height:20.3px;background:#4f81bd;border-radius:1.5px"></div>
<div class="a" style="left:54.2px;top:400px;width:17px;height:1px;background:#93afd6"></div>
<div class="a" style="left:52.2px;top:404px;width:21px;height:1px;background:#93afd6"></div>
<div class="a" style="left:94.5px;top:392.9px;width:33px;height:20.3px;background:#4f81bd;border-radius:1.5px"></div>
<div class="a" style="left:102.5px;top:400px;width:17px;height:1px;background:#93afd6"></div>
<div class="a" style="left:100.5px;top:404px;width:21px;height:1px;background:#93afd6"></div>
<div class="a" style="left:141.9px;top:392.9px;width:33px;height:20.3px;background:#4f81bd;border-radius:1.5px"></div>
<div class="a" style="left:149.9px;top:400px;width:17px;height:1px;background:#93afd6"></div>
<div class="a" style="left:147.9px;top:404px;width:21px;height:1px;background:#93afd6"></div>
<svg style="left:84.5px;top:399px" width="6" height="7"><path d="M0 2 H3 V0 L6 3.5 L3 7 V5 H0Z" fill="#a9b8d8"/></svg>
<svg style="left:132.5px;top:399px" width="6" height="7"><path d="M0 2 H3 V0 L6 3.5 L3 7 V5 H0Z" fill="#a9b8d8"/></svg>
<div class="a" style="left:28.7px;top:448.2px;width:159px;height:89.3px;background:#fff;border:1px solid #8f9298;box-shadow:1px 1px 2px rgba(60,60,70,0.35)"></div>
<div class="a" style="left:35px;top:469px;width:47px;height:60px;background:#4f81bd;border-radius:3px"></div>
<div class="a" style="left:85.2px;top:469px;width:45.499999999999986px;height:60px;background:#4f81bd;border-radius:3px"></div>
<div class="a" style="left:134.2px;top:469px;width:46.60000000000002px;height:60px;background:#4f81bd;border-radius:3px"></div>
<div class="a" style="left:47.3px;top:471.5px;width:22px;height:22px;background:#5a524c;border:1.5px solid #dfe6ef;border-radius:50%"></div>
<div class="a" style="left:96.8px;top:471.5px;width:22px;height:22px;background:#9a78a8;border:1.5px solid #dfe6ef;border-radius:50%"></div>
<div class="a" style="left:146.5px;top:471.5px;width:22px;height:22px;background:#c9aa94;border:1.5px solid #dfe6ef;border-radius:50%"></div>
<div class="a" style="left:43px;top:504.5px;width:31px;height:1.5px;background:#a9bfdf"></div>
<div class="a" style="left:94px;top:500.5px;width:27px;height:1.5px;background:#a9bfdf"></div>
<div class="a" style="left:96px;top:508px;width:23px;height:1.5px;background:#a9bfdf"></div>
<div class="a" style="left:143px;top:500.5px;width:30px;height:1.5px;background:#a9bfdf"></div>
<div class="a" style="left:141px;top:508px;width:34px;height:1.5px;background:#a9bfdf"></div>
<svg style="left:38px;top:517px" width="140" height="10"><path d="M0 5 L6 0.5 V3 H134 V0.5 L140 5 L134 9.5 V7 H6 V9.5Z" fill="#c6d3e8" stroke="#e6ecf5" stroke-width="0.6"/></svg>
<div class="a" style="left:9.8px;top:545.4px;width:181.4px;height:96.8px;background:linear-gradient(90deg,#fbd96a,#fde9a6 12%,#fff3cf 60%,#fdeeb8);border:1px solid #e7c45a;border-radius:2px"></div>
<div class="a" style="left:28.1px;top:549.3px;width:160.2px;height:90.5px;background:#fff;border:1px solid #d9c27a"></div>
<svg style="left:39.9px;top:570.6px" width="53.5" height="47.1" viewBox="0 0 269 236" preserveAspectRatio="none"><rect x="0" y="0" width="269" height="236" fill="#3f7cd6"/><rect x="24.5" y="75.0" width="6.5" height="149.0" fill="#e9cfa3" stroke="#2b2d55" stroke-width="0.8"/><rect x="70.0" y="101.0" width="6.5" height="123.0" fill="#e9cfa3" stroke="#2b2d55" stroke-width="0.8"/><rect x="120.0" y="138.0" width="6.5" height="86.0" fill="#e9cfa3" stroke="#2b2d55" stroke-width="0.8"/><rect x="175.0" y="192.0" width="6.5" height="32.0" fill="#e9cfa3" stroke="#2b2d55" stroke-width="0.8"/><path d="M28.0 80.0 C16.5 80.0 10.0 66.9 11.4 50.8 L10.0 37.7 L14.7 43.5 L13.6 26.7 L18.3 33.3 L19.4 11.4 L23.7 26.0 L28.0 7.0 L30.9 24.5 L35.9 9.9 L36.6 28.9 L42.4 20.1 L41.3 37.7 L46.0 34.7 L44.2 50.8 C46.0 68.3 39.5 80.0 28.0 80.0 Z" fill="#e95a2c" stroke="#2b2d55" stroke-width="1.2" stroke-linejoin="round"/><path d="M28.0 77.1 C19.4 77.1 15.0 65.4 15.8 52.3 L15.0 41.3 L19.4 45.0 L19.7 31.8 L23.7 39.1 L28.0 21.6 L31.6 37.7 L35.9 28.9 L36.6 43.5 L41.0 43.5 L40.2 53.7 C41.7 68.3 36.6 77.1 28.0 77.1 Z" fill="#f2a545"/><path d="M77.0 105.5 C64.5 105.5 57.5 89.7 59.1 70.3 L57.5 54.5 L62.6 61.5 L61.4 41.3 L66.5 49.2 L67.6 22.8 L72.3 40.4 L77.0 17.5 L80.1 38.6 L85.6 21.0 L86.4 43.9 L92.6 33.3 L91.4 54.5 L96.5 50.9 L94.5 70.3 C96.5 91.4 89.5 105.5 77.0 105.5 Z" fill="#e95a2c" stroke="#2b2d55" stroke-width="1.2" stroke-linejoin="round"/><path d="M77.0 102.0 C67.6 102.0 63.0 87.9 63.7 72.1 L63.0 58.9 L67.6 63.3 L68.0 47.4 L72.3 56.2 L77.0 35.1 L80.9 54.5 L85.6 43.9 L86.4 61.5 L91.0 61.5 L90.3 73.8 C91.8 91.4 86.4 102.0 77.0 102.0 Z" fill="#f2a545"/><path d="M128.0 142.0 C113.3 142.0 105.0 122.9 106.8 99.6 L105.0 80.5 L111.0 89.0 L109.6 64.6 L115.6 74.2 L117.0 42.4 L122.5 63.6 L128.0 36.0 L131.7 61.4 L138.1 40.2 L139.0 67.8 L146.4 55.1 L145.0 80.5 L151.0 76.3 L148.7 99.6 C151.0 125.0 142.7 142.0 128.0 142.0 Z" fill="#e95a2c" stroke="#2b2d55" stroke-width="1.2" stroke-linejoin="round"/><path d="M128.0 137.8 C117.0 137.8 111.4 120.8 112.4 101.7 L111.4 85.8 L117.0 91.1 L117.4 72.0 L122.5 82.6 L128.0 57.2 L132.6 80.5 L138.1 67.8 L139.0 89.0 L144.6 89.0 L143.6 103.8 C145.5 125.0 139.0 137.8 128.0 137.8 Z" fill="#f2a545"/><path d="M187.0 197.0 C171.6 197.0 163.0 170.9 164.9 139.0 L163.0 112.9 L169.2 124.5 L167.8 91.2 L174.0 104.2 L175.5 60.7 L181.2 89.7 L187.0 52.0 L190.8 86.8 L197.6 57.8 L198.5 95.5 L206.2 78.1 L204.8 112.9 L211.0 107.1 L208.6 139.0 C211.0 173.8 202.4 197.0 187.0 197.0 Z" fill="#e95a2c" stroke="#2b2d55" stroke-width="1.2" stroke-linejoin="round"/><path d="M187.0 191.2 C175.5 191.2 169.7 168.0 170.7 141.9 L169.7 120.1 L175.5 127.4 L176.0 101.3 L181.2 115.8 L187.0 81.0 L191.8 112.9 L197.6 95.5 L198.5 124.5 L204.3 124.5 L203.3 144.8 C205.2 173.8 198.5 191.2 187.0 191.2 Z" fill="#f2a545"/><ellipse cx="28" cy="57" rx="9.5" ry="20" fill="#3b2b2a"/><path d="M72 103 L71.5 68 Q71 46 80.5 46 Q91 46 90 61 Q88.5 76 77 76 L76.5 103Z" fill="#3b2b2a"/><path d="M121 140 L120.5 92 Q120 71 134 71 Q147 71 146 86 Q144 100 127 99 L126.5 140Z" fill="#3b2b2a"/><path d="M175.5 194 L175 120 Q175 93 190 93 Q206 93 205 106 Q203 120 186 118 Q181 118 181 130 L181 194Z" fill="#3b2b2a"/><path d="M224 224 L224 165 Q223 140 236 135 Q244 132 249 136 Q262 140 263 156 Q263 172 252 172 Q242 171 241 158 Q240 148 235 150 Q231 154 231 170 L231 224Z" fill="#3b2b2a" stroke="#2b2d55" stroke-width="0.8"/><rect x="224" y="220" width="7" height="4" fill="#e9cfa3"/><path d="M244 34 Q246 48 244 58 Q242 70 249 78 Q254 86 248 96 Q244 104 250 112" stroke="#fff" stroke-width="5" fill="none" stroke-linecap="round"/><ellipse cx="245" cy="36" rx="4.5" ry="8" fill="#fff"/><path d="M250 114 Q248 124 246 133" stroke="#2b2d55" stroke-width="0.8" fill="none"/></svg>
<div class="a" style="left:112px;top:557.2px;width:66.5px;height:1.6px;background:#b8b8b8"></div>
<div class="a" style="left:99px;top:561.2px;width:79.5px;height:1.6px;background:#b8b8b8"></div>
<div class="a" style="left:99px;top:565.2px;width:79.5px;height:1.6px;background:#b8b8b8"></div>
<div class="a" style="left:99px;top:569.2px;width:79.5px;height:1.6px;background:#b8b8b8"></div>
<div class="a" style="left:99px;top:573.2px;width:36px;height:1.6px;background:#b8b8b8"></div>
<div class="a" style="left:99px;top:581.7px;width:79.5px;height:2px;background:#8a8a8a"></div>
<div class="a" style="left:99px;top:585.7px;width:79.5px;height:2px;background:#8a8a8a"></div>
<div class="a" style="left:99px;top:589.7px;width:79.5px;height:2px;background:#8a8a8a"></div>
<div class="a" style="left:99px;top:593.7px;width:59px;height:2px;background:#8a8a8a"></div>
<div class="a" style="left:99px;top:602.7px;width:36px;height:1.6px;background:#b8b8b8"></div>
<div class="a" style="left:105px;top:606.7px;width:55px;height:1.6px;background:#b8b8b8"></div>
<div class="a" style="left:105px;top:610.7px;width:73.5px;height:1.6px;background:#b8b8b8"></div>
<div class="a" style="left:105px;top:614.7px;width:20px;height:1.6px;background:#b8b8b8"></div>
<div class="a" style="left:105px;top:618.7px;width:57px;height:1.6px;background:#b8b8b8"></div>
<div class="a" style="left:99.5px;top:607px;width:3px;height:1.2px;background:#999"></div>
<div class="a" style="left:99.5px;top:611px;width:3px;height:1.2px;background:#999"></div>
<div class="a" style="left:99.5px;top:619px;width:3px;height:1.2px;background:#999"></div>
<svg style="left:108.8px;top:583.5px" width="12" height="17"><path d="M0.5 0.5 V14 L4 10.8 L6.8 16.2 L8.8 15.2 L6.2 10 L10.8 10Z" fill="#fff" stroke="#222" stroke-width="1"/></svg>
<div class="a" style="left:28.1px;top:650.5px;width:160px;height:84px;overflow:hidden;background:#fff;border:1px solid #8f9298;box-shadow:1px 1px 2px rgba(60,60,70,0.35)"></div>
<div class="a" style="left:67.2px;top:657.5px;width:94.2px;height:3.2px;background:#f4a4b0"></div>
<div class="a" style="left:39.9px;top:667px;width:39.6px;height:65.5px;background:#f7c21f"></div>
<svg style="left:39.9px;top:667px" width="40" height="66"><circle cx="27" cy="11" r="4" fill="#2a3550"/><path d="M15 22 Q22 14 28 18 L30 32 L20 34Z" fill="#f07a2a"/><circle cx="12" cy="15" r="3.5" fill="#f0f0f0"/><rect x="15" y="33" width="3" height="28" fill="#2c3548"/><rect x="20" y="33" width="3" height="28" fill="#2c3548"/></svg>
<div class="a" style="left:96px;top:673.0px;width:79px;height:1.2px;background:#c4c4c4"></div>
<div class="a" style="left:96px;top:677.4px;width:29px;height:1.2px;background:#c4c4c4"></div>
<div class="a" style="left:96px;top:681.8px;width:79px;height:1.2px;background:#c4c4c4"></div>
<div class="a" style="left:96px;top:686.2px;width:79px;height:1.2px;background:#c4c4c4"></div>
<div class="a" style="left:96px;top:690.6px;width:74px;height:1.2px;background:#c4c4c4"></div>
<div class="a" style="left:96px;top:695.0px;width:64px;height:1.2px;background:#c4c4c4"></div>
<div class="a" style="left:96px;top:699.4px;width:74px;height:1.2px;background:#c4c4c4"></div>
<div class="a" style="left:96px;top:703.8px;width:79px;height:1.2px;background:#c4c4c4"></div>
<div class="a" style="left:96px;top:708.2px;width:64px;height:1.2px;background:#c4c4c4"></div>
<div class="a" style="left:96px;top:712.6px;width:79px;height:1.2px;background:#c4c4c4"></div>
<div class="a" style="left:96px;top:717.0px;width:69px;height:1.2px;background:#c4c4c4"></div>
<div class="a" style="left:96px;top:721.4px;width:79px;height:1.2px;background:#c4c4c4"></div>
<div class="a" style="left:96px;top:725.8px;width:54px;height:1.2px;background:#c4c4c4"></div>
<div class="t" style="left:16.60px;top:250.09px;font-size:10.17px;color:#555;font-weight:700;">1</div>
<div class="t" style="left:16.60px;top:350.89px;font-size:10.17px;color:#555;font-weight:700;">2</div>
<div class="t" style="left:16.60px;top:452.39px;font-size:10.17px;color:#555;font-weight:700;">3</div>
<div class="t" style="left:16.60px;top:553.39px;font-size:10.17px;color:#555;font-weight:700;">4</div>
<div class="t" style="left:16.60px;top:655.29px;font-size:10.17px;color:#555;font-weight:700;">5</div>
<div class="a" style="left:1269px;top:431px;width:3px;height:42px;background:#8a8a8a;border-radius:1px"></div>
<svg style="left:1278px;top:335px;overflow:hidden" width="316" height="177" viewBox="0 0 316 177"><defs><filter id="bl" x="-20%" y="-20%" width="140%" height="140%"><feGaussianBlur stdDeviation="1.8"/></filter><filter id="bl2" x="-50%" y="-50%" width="200%" height="200%"><feGaussianBlur stdDeviation="4"/></filter><linearGradient id="wall" x1="0" y1="0" x2="1" y2="0"><stop offset="0" stop-color="#cfdde0"/><stop offset="0.35" stop-color="#d8e4e5"/><stop offset="0.7" stop-color="#bccfcd"/><stop offset="1" stop-color="#b3c7c4"/></linearGradient><linearGradient id="skin" x1="0" y1="0" x2="1" y2="0.3"><stop offset="0" stop-color="#d6a898"/><stop offset="0.6" stop-color="#c99888"/><stop offset="1" stop-color="#a87a6e"/></linearGradient></defs><rect width="316" height="177" fill="url(#wall)"/><g filter="url(#bl)"><ellipse cx="50" cy="140" rx="70" ry="50" fill="#e2eaec" opacity="0.7" filter="url(#bl2)"/><rect x="0" y="0" width="58" height="70" fill="#c8b8a8"/><rect x="0" y="0" width="58" height="16" fill="#9aa89a"/><path d="M0 16 Q25 14 58 18 L58 34 Q30 30 0 40Z" fill="#8ea4bc"/><path d="M0 40 Q30 30 58 34 L58 46 Q30 44 0 54Z" fill="#b8c4d0"/><path d="M0 54 Q30 44 58 46 L58 70 L0 70Z" fill="#d9bba0"/><rect x="56" y="0" width="3" height="70" fill="#9a8a80"/><rect x="114" y="0" width="116" height="16" fill="#b4a4b4"/><rect x="195" y="0" width="35" height="22" fill="#a8a878"/><path d="M92 177 L92 140 Q110 128 128 128 L160 177Z" fill="#161616"/><path d="M175 177 Q200 140 226 118 Q262 118 285 138 Q300 155 310 177Z" fill="#151515"/><path d="M112 130 Q104 70 122 38 Q150 8 195 10 Q238 18 249 70 Q254 110 244 130 L222 142 Q218 100 214 66 Q190 52 165 52 Q140 55 126 66 Q124 100 126 132Z" fill="#262626"/><path d="M125 62 Q170 46 216 64 Q222 100 217 130 Q210 162 182 176 L152 177 Q128 162 124 128 Q121 95 125 62Z" fill="url(#skin)"/></g><g filter="url(#bl)"><path d="M124 68 Q140 52 160 60 Q175 48 192 54 Q206 56 217 68 Q214 36 190 28 Q150 24 128 42Z" fill="#242424"/><ellipse cx="140" cy="90" rx="7" ry="2.5" fill="#5a4040"/><ellipse cx="184" cy="91" rx="7" ry="2.5" fill="#5a4040"/><path d="M145 137 Q160 132 176 136 Q162 144 145 137Z" fill="#8a5454"/><path d="M104 112 Q100 140 101 177" stroke="#222" stroke-width="1.6" fill="none"/></g></svg>
<div class="a" style="left:1287px;top:343px;width:165px;height:24px;background:rgba(38,38,40,0.82);border-radius:5px"></div>
<svg style="left:1298px;top:349px" width="10" height="13"><path d="M2 0 H8 L7 5 L9.5 8 H0.5 L3 5Z" fill="#f4f4f4"/><rect x="4.4" y="8" width="1.2" height="5" fill="#f4f4f4"/></svg>
<div class="t" style="left:1315.60px;top:348.33px;font-size:13.08px;color:#f2f2f2;transform:scaleX(0.9500);">Удалить закрепление</div>
<div class="a" style="left:1282px;top:491px;width:122px;height:20px;background:rgba(40,40,42,0.72);border-radius:4px"></div>
<svg style="left:1284px;top:495px" width="15" height="12"><rect x="0" y="8" width="2.5" height="4" fill="#fff"/><rect x="4" y="5.5" width="2.5" height="6.5" fill="#fff"/><rect x="8" y="3" width="2.5" height="9" fill="#fff"/><rect x="12" y="0" width="2.5" height="12" fill="#fff"/></svg>
<div class="t" style="left:1305.00px;top:494.93px;font-size:13.08px;color:#f0f0f0;transform:scaleX(0.9252);">Ірина ПЄТУХОВА</div>
<svg style="left:43px;top:799px" width="25" height="25" viewBox="0 0 25 25" fill="none" stroke="#f0f0f0" stroke-width="1.6"><rect x="9" y="1" width="7" height="13" rx="3.5"/><path d="M5 11 Q5 18 12.5 18 Q20 18 20 11"/><path d="M12.5 18 V23 M8.5 23.5 H16.5"/><path d="M2 23.5 L22.5 1.5" stroke="#e8336a" stroke-width="2.2"/></svg>
<svg style="left:83px;top:809.5px" width="9" height="5"><path d="M0.8 4.4 L4.5 0.8 L8.2 4.4" stroke="#e8e8e8" stroke-width="1.5" fill="none"/></svg>
<div class="t" style="left:42.40px;top:829.43px;font-size:13.66px;color:#f2f2f2;font-weight:700;transform:scaleX(0.8025);">Звук</div>
<svg style="left:138px;top:800px" width="27" height="23" viewBox="0 0 27 23" fill="none" stroke="#f0f0f0" stroke-width="1.6"><rect x="1" y="5" width="17" height="13" rx="2"/><path d="M18 10 L25.5 5.5 V17.5 L18 13"/><path d="M1.5 22 L21 1" stroke="#e8336a" stroke-width="2.2"/></svg>
<svg style="left:186px;top:809.5px" width="9" height="5"><path d="M0.8 4.4 L4.5 0.8 L8.2 4.4" stroke="#e8e8e8" stroke-width="1.5" fill="none"/></svg>
<div class="t" style="left:133.60px;top:829.43px;font-size:13.66px;color:#f2f2f2;font-weight:700;transform:scaleX(0.8391);">Видео</div>
<svg style="left:300px;top:803px" width="20" height="19" viewBox="0 0 20 19" fill="none" stroke="#f0f0f0" stroke-width="1.6"><circle cx="6.5" cy="4.5" r="3.5"/><circle cx="14" cy="9" r="3"/><path d="M1 16 Q1 10 6.5 10 Q9 10 10 11"/><path d="M8.5 18 Q8.5 13 14 13 Q19 13 19 18Z"/></svg>
<div class="t" style="left:328.20px;top:802.86px;font-size:13.52px;color:#a8a8a8;font-weight:700;transform:scaleX(0.8864);">47</div>
<svg style="left:360.7px;top:809.5px" width="9" height="5"><path d="M0.8 4.4 L4.5 0.8 L8.2 4.4" stroke="#e8e8e8" stroke-width="1.5" fill="none"/></svg>
<div class="t" style="left:279.60px;top:829.43px;font-size:13.66px;color:#f2f2f2;font-weight:700;transform:scaleX(0.8601);">Участники</div>
<svg style="left:412px;top:800px" width="25" height="23" viewBox="0 0 25 23" fill="none" stroke="#f0f0f0" stroke-width="1.6"><path d="M8 3 Q8 1 10 1 H21 Q24 1 24 4 V11 Q24 13 22 13"/><path d="M1 8 Q1 5 4 5 H16 Q19 5 19 8 V15 Q19 18 16 18 H8 L4 22 V18 Q1 18 1 15Z"/><circle cx="6" cy="11.5" r="0.9" fill="#f0f0f0"/><circle cx="10" cy="11.5" r="0.9" fill="#f0f0f0"/><circle cx="14" cy="11.5" r="0.9" fill="#f0f0f0"/></svg>
<svg style="left:454.7px;top:809.5px" width="9" height="5"><path d="M0.8 4.4 L4.5 0.8 L8.2 4.4" stroke="#e8e8e8" stroke-width="1.5" fill="none"/></svg>
<div class="t" style="left:415.30px;top:829.43px;font-size:13.66px;color:#f2f2f2;font-weight:700;transform:scaleX(0.8072);">Чат</div>
<svg style="left:511px;top:801px" width="27" height="22" viewBox="0 0 27 22" fill="none" stroke="#f0f0f0" stroke-width="1.6"><path d="M13.5 21 L3 11 Q0 7.5 1.5 4.5 Q3.5 1 7.5 1 Q11 1 13.5 4.5 Q16 1 19.5 1 Q23.5 1 25.5 4.5 Q27 7.5 24 11Z"/></svg>
<svg style="left:559px;top:809.5px" width="9" height="5"><path d="M0.8 4.4 L4.5 0.8 L8.2 4.4" stroke="#e8e8e8" stroke-width="1.5" fill="none"/></svg>
<div class="t" style="left:481.00px;top:829.43px;font-size:13.66px;color:#f2f2f2;font-weight:700;transform:scaleX(0.8533);">Отреагировать</div>
<div class="a" style="left:615px;top:801.5px;width:25px;height:21px;background:#0fd167;border-radius:3px"></div>
<svg style="left:620px;top:805px" width="15" height="14"><path d="M7.5 0.5 L13.5 7 H9.7 V13.5 H5.3 V7 H1.5Z" fill="#06261a"/></svg>
<div class="t" style="left:593.50px;top:829.43px;font-size:13.66px;color:#f2f2f2;font-weight:700;transform:scaleX(0.8417);">Поделиться</div>
<svg style="left:728px;top:802px" width="28" height="21" viewBox="0 0 28 21" fill="none" stroke="#f0f0f0" stroke-width="1.6"><path d="M3 18 H1.5 Q1 18 1 17 V2 Q1 1 2 1 H25 Q26 1 26 2 V12"/><rect x="14" y="15.5" width="13" height="4.5" rx="1.5" fill="#f0f0f0"/></svg>
<div class="t" style="left:687.50px;top:829.43px;font-size:13.66px;color:#f2f2f2;font-weight:700;transform:scaleX(0.8923);">Доски сообщений</div>
<svg style="left:839px;top:801px" width="24" height="22" viewBox="0 0 24 22" fill="none" stroke="#f0f0f0" stroke-width="1.6"><circle cx="18" cy="5" r="4"/><circle cx="5" cy="17" r="3.8"/><path d="M1 9 V3 Q1 1 3 1 H8"/><path d="M23 13 V19 Q23 21 21 21 H15"/></svg>
<div class="t" style="left:812.50px;top:829.43px;font-size:13.66px;color:#f2f2f2;font-weight:700;transform:scaleX(0.9002);">Приложения</div>
<svg style="left:927px;top:800px" width="24" height="24" viewBox="0 0 24 24"><circle cx="12" cy="12" r="10.8" fill="none" stroke="#f0f0f0" stroke-width="1.7"/><circle cx="12" cy="12" r="5.5" fill="#f0f0f0"/></svg>
<div class="t" style="left:918.50px;top:829.43px;font-size:13.66px;color:#f2f2f2;font-weight:700;transform:scaleX(0.8303);">Запись</div>
<svg style="left:1012px;top:800px" width="21" height="24" viewBox="0 0 21 24" fill="none" stroke="#f0f0f0" stroke-width="1.7"><rect x="1" y="1" width="19" height="22" rx="3"/><path d="M5.5 7 H12 M5.5 12 H15.5 M5.5 17 H12"/></svg>
<div class="t" style="left:989.00px;top:829.43px;font-size:13.66px;color:#f2f2f2;font-weight:700;transform:scaleX(0.8718);">Документы</div>
<svg style="left:1104px;top:799px" width="25" height="25" viewBox="0 0 25 25" fill="none" stroke="#f0f0f0" stroke-width="1.7"><path d="M4 3 Q4 1 6 1 H16 Q18 1 18 3 V19 H6 Q4 19 4 17Z"/><path d="M8 6 H14 M8 10 H14 M8 14 H12"/><path d="M1 4 H4 M1 8 H4 M1 12 H4 M1 16 H4" stroke-width="1.3"/><rect x="12" y="19" width="12" height="4.5" rx="1.5" fill="#f0f0f0" stroke="none"/></svg>
<div class="t" style="left:1078.50px;top:829.43px;font-size:13.66px;color:#f2f2f2;font-weight:700;transform:scaleX(0.8919);">Примечания</div>
<svg style="left:1250px;top:799px" width="26" height="26" viewBox="0 0 26 26"><circle cx="13" cy="13" r="11.8" fill="none" stroke="#f0f0f0" stroke-width="1.7"/><circle cx="13" cy="7.5" r="1.5" fill="#f0f0f0"/><path d="M10 11 H13.8 V18.5 M10 19 H17" stroke="#f0f0f0" stroke-width="2" fill="none"/></svg>
<div class="t" style="left:1176.00px;top:829.43px;font-size:13.66px;color:#f2f2f2;font-weight:700;transform:scaleX(0.8850);">Информация о конференции</div>
<svg style="left:1400px;top:799px" width="26" height="26" viewBox="0 0 26 26"><circle cx="13" cy="13" r="11.8" fill="none" stroke="#f0f0f0" stroke-width="1.7"/><circle cx="8" cy="13" r="1.6" fill="#f0f0f0"/><circle cx="13" cy="13" r="1.6" fill="#f0f0f0"/><circle cx="18" cy="13" r="1.6" fill="#f0f0f0"/></svg>
<div class="t" style="left:1366.50px;top:829.43px;font-size:13.66px;color:#f2f2f2;font-weight:700;transform:scaleX(0.8581);">Дополнительно</div>
<svg style="left:1535px;top:798px" width="28" height="27" viewBox="0 0 28 27"><path d="M11.8 1.2 H26.4 V21" stroke="#e0245e" stroke-width="1.5" fill="none"/><path d="M19.2 6.1 L24.8 4 V21.4 L19.2 25.1Z" stroke="#e0245e" stroke-width="1.6" fill="none" stroke-linejoin="round"/><circle cx="10.8" cy="7.4" r="3" stroke="#f0f0f0" stroke-width="1.4" fill="none"/><path d="M8 11.8 Q11 10.6 13.2 12.2 L16.2 16.4 L14.6 17.6 L12.6 15.2 L12.3 18.2 L14.6 24.6 L12.4 25.4 L10.2 20.2 L7 25.2 L4.8 24.2 L8.2 18.2 L8.3 15.2 L5.8 16.8 L4.4 15.4Z" stroke="#f0f0f0" stroke-width="1.4" fill="none" stroke-linejoin="round"/></svg>
<div class="t" style="left:1531.00px;top:829.43px;font-size:13.66px;color:#f2f2f2;font-weight:700;transform:scaleX(0.7886);">Выйти</div>
<svg style="left:22px;top:863.5px" width="24" height="24" viewBox="0 0 24 24"><defs><linearGradient id="wg" x1="0" y1="0" x2="1" y2="1"><stop offset="0" stop-color="#6ad2fb"/><stop offset="1" stop-color="#1a8fe8"/></linearGradient></defs><rect x="0" y="0" width="11.3" height="11.3" rx="0.5" fill="url(#wg)"/><rect x="12.5" y="0" width="11.3" height="11.3" rx="0.5" fill="url(#wg)"/><rect x="0" y="12.5" width="11.3" height="11.3" rx="0.5" fill="url(#wg)"/><rect x="12.5" y="12.5" width="11.3" height="11.3" rx="0.5" fill="url(#wg)"/></svg>
<svg style="left:70px;top:862.5px" width="24" height="24" viewBox="0 0 24 24"><circle cx="9.5" cy="9.5" r="8" fill="#4a4d52" stroke="#e8e8e8" stroke-width="2.2"/><path d="M15.3 15.3 L22.5 22.5" stroke="#e0e0e0" stroke-width="2.6" stroke-linecap="round"/></svg>
<svg style="left:114px;top:862px" width="25" height="25" viewBox="0 0 24 24"><circle cx="12" cy="12" r="11.5" fill="#db4437"/><path d="M12 12 L22 6.2 A11.5 11.5 0 0 1 12 23.5Z" fill="#f4c20d"/><path d="M12 12 L12 23.5 A11.5 11.5 0 0 1 2 6.2Z" fill="#0f9d58"/><path d="M12 12 L2 6.2 A11.5 11.5 0 0 1 12 0.5 Z" fill="#db4437"/><circle cx="12" cy="12" r="5.3" fill="#fff"/><circle cx="12" cy="12" r="4.2" fill="#4285f4"/></svg>
<svg style="left:160px;top:862px" width="25" height="26" viewBox="0 0 25 26"><path d="M12.5 1 Q23.5 1 23.5 11.5 Q23.5 21 13 21.5 L8 25 V21 Q1.5 19 1.5 11.5 Q1.5 1 12.5 1Z" fill="#7d5ed8" stroke="#ece6ff" stroke-width="1.8"/><path d="M8 7 Q9 6 10 7.5 L11 9.5 Q10.5 11 11.5 12.5 Q13 14.2 14.5 14 L16.5 15 Q17.5 16 16 17 Q14 18 11 15.5 Q7.5 12.5 7.5 9.5 Q7.5 8 8 7Z" fill="#fff"/></svg>
<div class="a" style="left:169.5px;top:891.5px;width:6px;height:2.2px;background:#9a9a9a;border-radius:1px"></div>
<div class="a" style="left:197.5px;top:854px;width:41.5px;height:42px;background:#2b3036;border-radius:5px"></div>
<svg style="left:206px;top:862px" width="25" height="25" viewBox="0 0 25 25"><rect x="0" y="0" width="25" height="25" rx="7" fill="#0b5cff"/><text x="3.2" y="14.5" font-family="Liberation Sans" font-size="5.6" font-weight="700" fill="#fff">zoom</text></svg>
<div class="a" style="left:210px;top:892px;width:16px;height:3px;background:#d8d8d8;border-radius:1.5px"></div>
<svg style="left:1326px;top:871px" width="13" height="8"><path d="M1 7 L6.5 1.5 L12 7" stroke="#f0f0f0" stroke-width="1.6" fill="none"/></svg>
<svg style="left:1355px;top:867.5px" width="23" height="16" viewBox="0 0 23 16" fill="none" stroke="#e8e8e8" stroke-width="1.3"><rect x="3" y="0.7" width="4.5" height="8" rx="2.2"/><path d="M1 6 Q1 11 5.2 11 Q9.4 11 9.4 6 M5.2 11 V14"/><path d="M12 9 L22 4 L17 15 L16 11Z"/></svg>
<div class="t" style="left:1395.00px;top:867.79px;font-size:13.95px;color:#f0f0f0;transform:scaleX(0.7984);">УКР</div>
<svg style="left:1436px;top:867px" width="17" height="14" viewBox="0 0 17 14" fill="none" stroke="#f0f0f0" stroke-width="1.5"><path d="M1 5 Q8.5 -1.5 16 5"/><path d="M3.5 7.7 Q8.5 3 13.5 7.7"/><path d="M6 10.3 Q8.5 8 11 10.3"/><circle cx="8.5" cy="12.5" r="1" fill="#f0f0f0"/></svg>
<svg style="left:1461px;top:867px" width="18" height="15" viewBox="0 0 18 15" fill="none" stroke="#f0f0f0" stroke-width="1.4"><path d="M1 5 H4 L8.5 1 V14 L4 10 H1Z"/><path d="M11 4.5 Q13 7.5 11 10.5 M13.3 2.5 Q16.5 7.5 13.3 12.5"/></svg>
<svg style="left:1486px;top:866px" width="19" height="16" viewBox="0 0 19 16" fill="none" stroke="#f0f0f0" stroke-width="1.4"><rect x="1" y="5" width="15" height="9" rx="1.5"/><path d="M17 8 V11"/><path d="M3 3 L7 0.8" /><path d="M2.5 6.5 H10 V12.5 H2.5" fill="#f0f0f0"/></svg>
<div class="t" style="left:1550.00px;top:860.52px;font-size:12.50px;color:#f0f0f0;transform:scaleX(0.9261);">10:15</div>
<div class="t" style="left:1521.00px;top:875.47px;font-size:12.79px;color:#f0f0f0;transform:scaleX(0.9060);">01.10.2025</div></body></html>
